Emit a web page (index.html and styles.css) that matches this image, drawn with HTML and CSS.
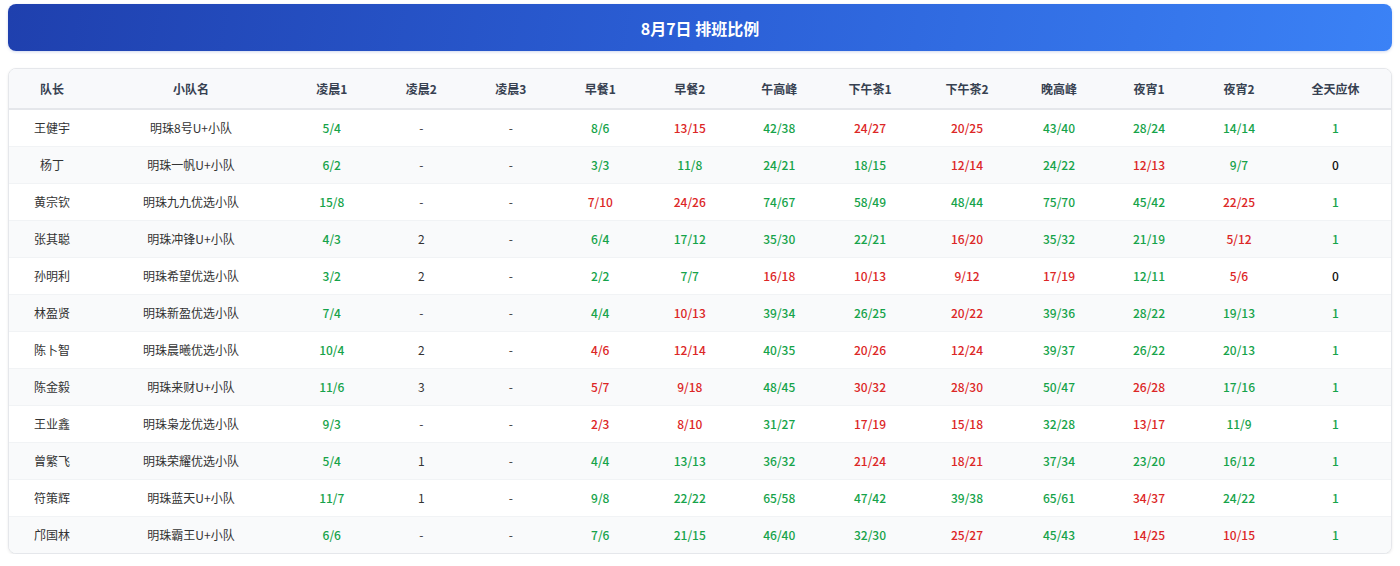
FILE: index.html
```html
<!DOCTYPE html>
<html lang="zh-CN">
<head>
<meta charset="utf-8">
<title>8月7日 排班比例</title>
<link rel="stylesheet" href="styles.css">
</head>
<body>
<div class="page">
  <header class="banner">8月7日 排班比例</header>
  <div class="card">
    <table class="grid">
      <colgroup>
        <col class="c-lead"><col class="c-team">
        <col class="c-std"><col class="c-std"><col class="c-std"><col class="c-std"><col class="c-std"><col class="c-std">
        <col class="c-t1"><col class="c-t2"><col class="c-eve"><col class="c-n1"><col class="c-n2"><col class="c-rest">
      </colgroup>
      <thead>
        <tr><th>队长</th><th>小队名</th><th>凌晨1</th><th>凌晨2</th><th>凌晨3</th><th>早餐1</th><th>早餐2</th><th>午高峰</th><th>下午茶1</th><th>下午茶2</th><th>晚高峰</th><th>夜宵1</th><th>夜宵2</th><th>全天应休</th></tr>
      </thead>
      <tbody>
        <tr><td>王健宇</td><td>明珠8号U+小队</td><td class="ok">5/4</td><td>-</td><td>-</td><td class="ok">8/6</td><td class="bad">13/15</td><td class="ok">42/38</td><td class="bad">24/27</td><td class="bad">20/25</td><td class="ok">43/40</td><td class="ok">28/24</td><td class="ok">14/14</td><td class="ok">1</td></tr>
        <tr><td>杨丁</td><td>明珠一帆U+小队</td><td class="ok">6/2</td><td>-</td><td>-</td><td class="ok">3/3</td><td class="ok">11/8</td><td class="ok">24/21</td><td class="ok">18/15</td><td class="bad">12/14</td><td class="ok">24/22</td><td class="bad">12/13</td><td class="ok">9/7</td><td class="zero">0</td></tr>
        <tr><td>黄宗钦</td><td>明珠九九优选小队</td><td class="ok">15/8</td><td>-</td><td>-</td><td class="bad">7/10</td><td class="bad">24/26</td><td class="ok">74/67</td><td class="ok">58/49</td><td class="ok">48/44</td><td class="ok">75/70</td><td class="ok">45/42</td><td class="bad">22/25</td><td class="ok">1</td></tr>
        <tr><td>张其聪</td><td>明珠冲锋U+小队</td><td class="ok">4/3</td><td>2</td><td>-</td><td class="ok">6/4</td><td class="ok">17/12</td><td class="ok">35/30</td><td class="ok">22/21</td><td class="bad">16/20</td><td class="ok">35/32</td><td class="ok">21/19</td><td class="bad">5/12</td><td class="ok">1</td></tr>
        <tr><td>孙明利</td><td>明珠希望优选小队</td><td class="ok">3/2</td><td>2</td><td>-</td><td class="ok">2/2</td><td class="ok">7/7</td><td class="bad">16/18</td><td class="bad">10/13</td><td class="bad">9/12</td><td class="bad">17/19</td><td class="ok">12/11</td><td class="bad">5/6</td><td class="zero">0</td></tr>
        <tr><td>林盈贤</td><td>明珠新盈优选小队</td><td class="ok">7/4</td><td>-</td><td>-</td><td class="ok">4/4</td><td class="bad">10/13</td><td class="ok">39/34</td><td class="ok">26/25</td><td class="bad">20/22</td><td class="ok">39/36</td><td class="ok">28/22</td><td class="ok">19/13</td><td class="ok">1</td></tr>
        <tr><td>陈卜智</td><td>明珠晨曦优选小队</td><td class="ok">10/4</td><td>2</td><td>-</td><td class="bad">4/6</td><td class="bad">12/14</td><td class="ok">40/35</td><td class="bad">20/26</td><td class="bad">12/24</td><td class="ok">39/37</td><td class="ok">26/22</td><td class="ok">20/13</td><td class="ok">1</td></tr>
        <tr><td>陈金毅</td><td>明珠来财U+小队</td><td class="ok">11/6</td><td>3</td><td>-</td><td class="bad">5/7</td><td class="bad">9/18</td><td class="ok">48/45</td><td class="bad">30/32</td><td class="bad">28/30</td><td class="ok">50/47</td><td class="bad">26/28</td><td class="ok">17/16</td><td class="ok">1</td></tr>
        <tr><td>王业鑫</td><td>明珠枭龙优选小队</td><td class="ok">9/3</td><td>-</td><td>-</td><td class="bad">2/3</td><td class="bad">8/10</td><td class="ok">31/27</td><td class="bad">17/19</td><td class="bad">15/18</td><td class="ok">32/28</td><td class="bad">13/17</td><td class="ok">11/9</td><td class="ok">1</td></tr>
        <tr><td>曾繁飞</td><td>明珠荣耀优选小队</td><td class="ok">5/4</td><td>1</td><td>-</td><td class="ok">4/4</td><td class="ok">13/13</td><td class="ok">36/32</td><td class="bad">21/24</td><td class="bad">18/21</td><td class="ok">37/34</td><td class="ok">23/20</td><td class="ok">16/12</td><td class="ok">1</td></tr>
        <tr><td>符策辉</td><td>明珠蓝天U+小队</td><td class="ok">11/7</td><td>1</td><td>-</td><td class="ok">9/8</td><td class="ok">22/22</td><td class="ok">65/58</td><td class="ok">47/42</td><td class="ok">39/38</td><td class="ok">65/61</td><td class="bad">34/37</td><td class="ok">24/22</td><td class="ok">1</td></tr>
        <tr><td>邝国林</td><td>明珠霸王U+小队</td><td class="ok">6/6</td><td>-</td><td>-</td><td class="ok">7/6</td><td class="ok">21/15</td><td class="ok">46/40</td><td class="ok">32/30</td><td class="bad">25/27</td><td class="ok">45/43</td><td class="bad">14/25</td><td class="bad">10/15</td><td class="ok">1</td></tr>
      </tbody>
    </table>
  </div>
</div>
</body>
</html>
```

FILE: styles.css
```css
* { box-sizing: border-box; }
html, body { margin: 0; padding: 0; background: #ffffff; }
body {
  font-family: "Noto Sans CJK SC", "Noto Sans", "Liberation Sans", sans-serif;
  color: #333333;
}
.page {
  padding: 4px 8px 0 8px;
  display: flex;
  flex-direction: column;
  gap: 17px;
}
.banner {
  height: 47px;
  border-radius: 8px;
  background: linear-gradient(100deg, #1f40ae 0%, #2b5fd6 50%, #3b82f6 100%);
  color: #ffffff;
  font-size: 16px;
  font-weight: 700;
  display: flex;
  align-items: center;
  justify-content: center;
  box-shadow: 0 1px 3px rgba(30, 64, 175, 0.2);
}
.card {
  border: 1px solid #e5e7eb;
  border-radius: 8px;
  overflow: hidden;
  background: #ffffff;
  box-shadow: 0 1px 3px rgba(0, 0, 0, 0.08);
}
.grid {
  width: 100%;
  border-collapse: collapse;
  table-layout: fixed;
  font-size: 12px;
}
.c-lead { width: 86px; }
.c-team { width: 192px; }
.c-std { width: 89.5px; }
.c-t1 { width: 92px; }
.c-t2 { width: 102px; }
.c-eve { width: 82px; }
.c-n1 { width: 98px; }
.c-n2 { width: 82px; }
.c-rest { width: auto; }
.grid th {
  height: 40px;
  background: #f8f9fb;
  color: #374151;
  font-weight: 600;
  text-align: center;
  border-bottom: 2px solid #e5e7eb;
  padding: 0;
}
.grid td {
  height: 37px;
  text-align: center;
  padding: 0;
  color: #333333;
  border-bottom: 1px solid #f1f3f5;
}
.grid tbody tr:nth-child(even) td { background: #f9fafb; }
.grid tbody tr:last-child td { border-bottom: none; }
.grid td.ok { color: #16a34a; font-weight: 500; }
.grid td.bad { color: #dc2626; font-weight: 500; }
.grid td.zero { color: #111111; font-weight: 500; }
```
